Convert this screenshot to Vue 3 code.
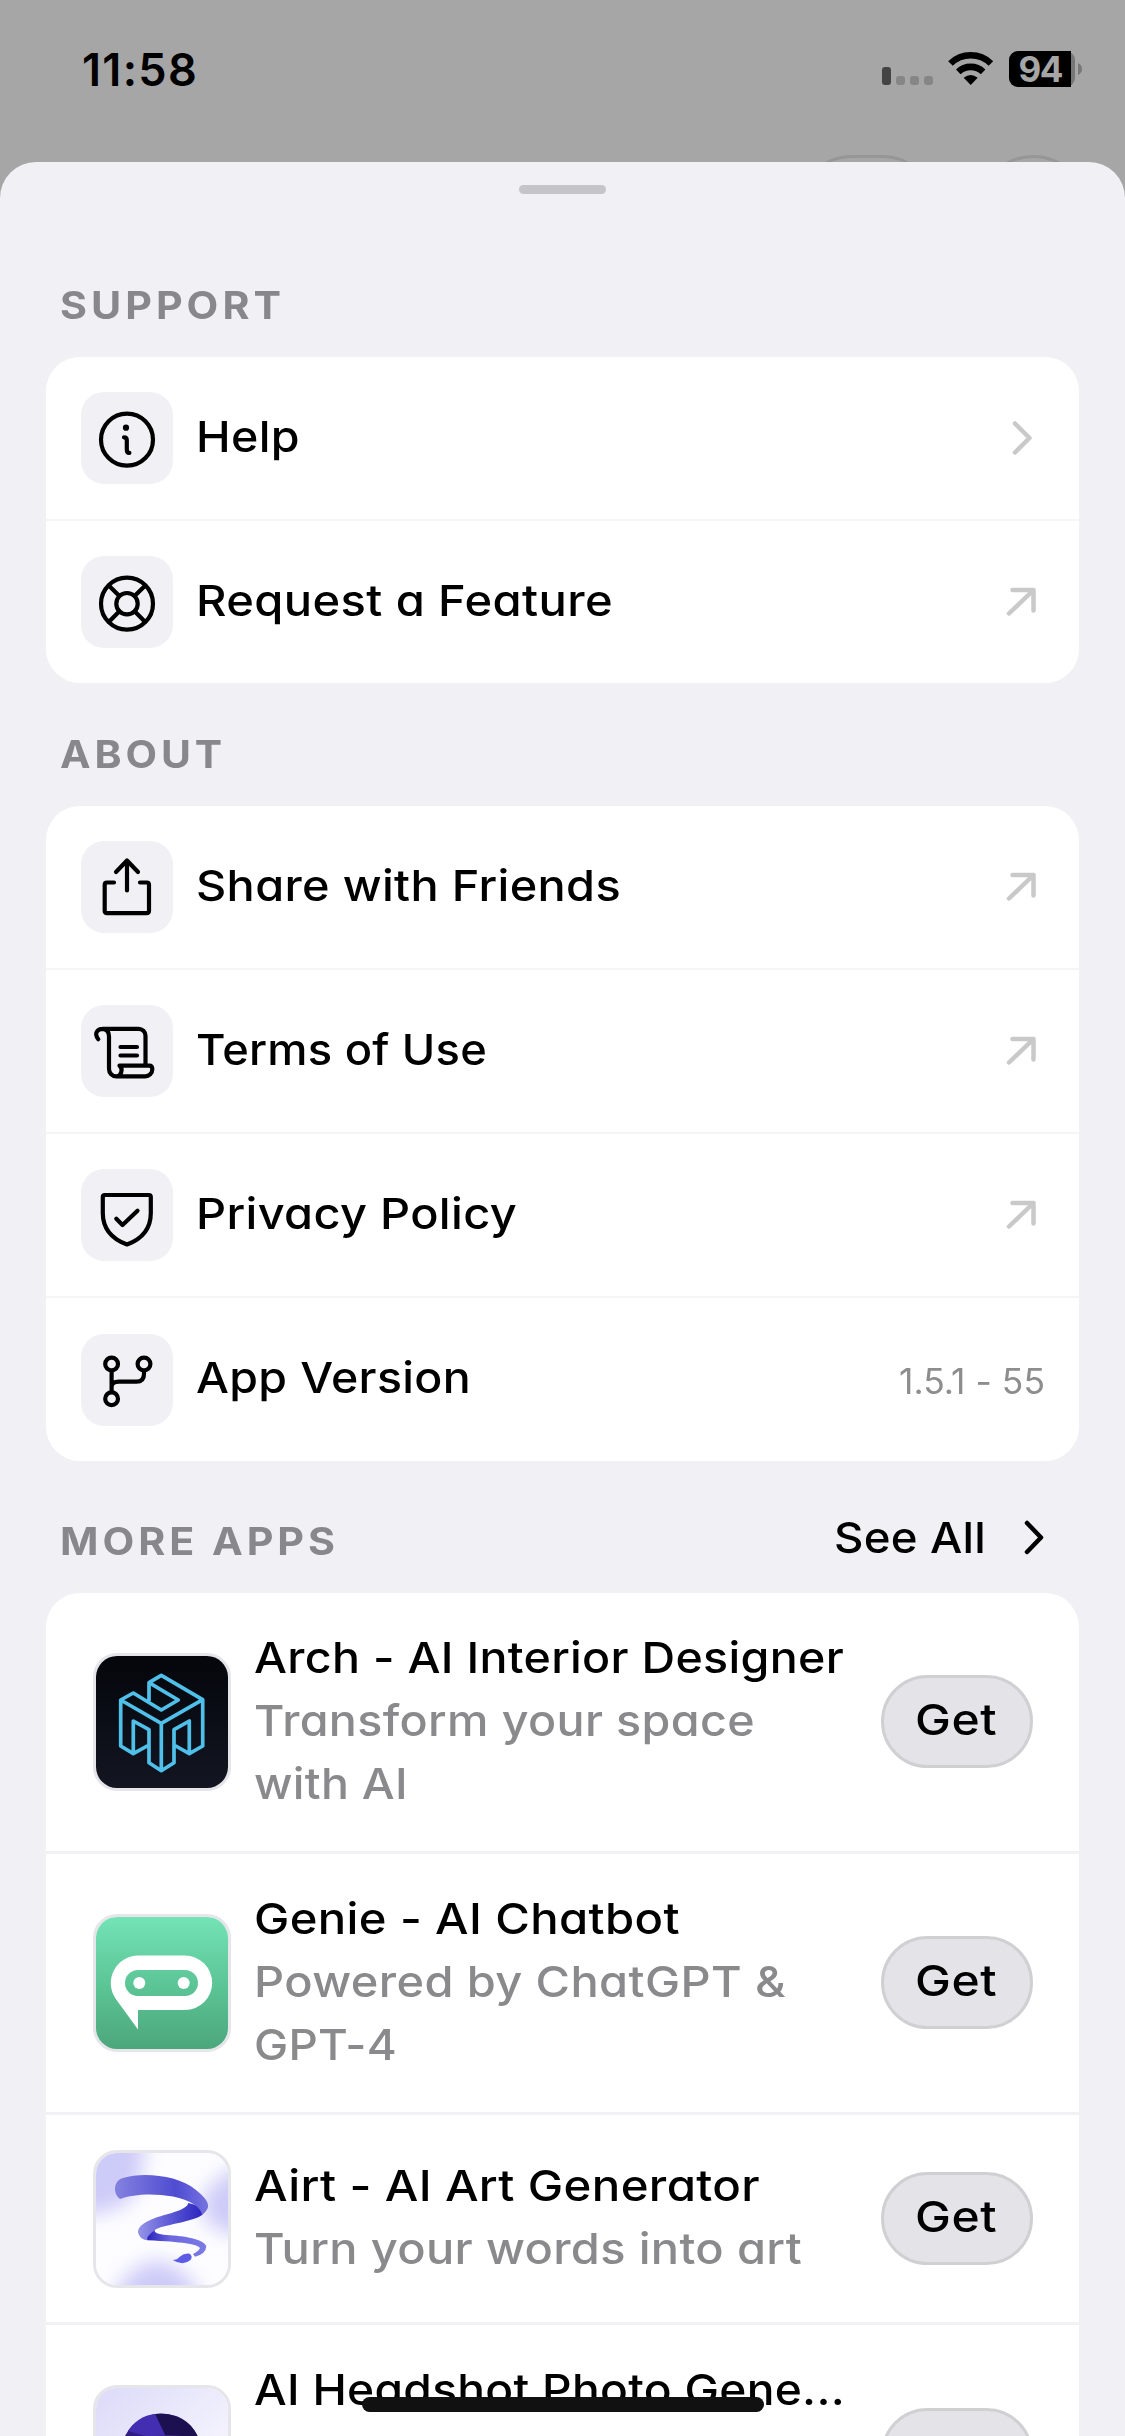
<script setup>
// Widens a label to its designed width: partly by stretching the glyphs,
// with the remainder taken up by letter-spacing. v-fit:caps tracks more.
const vFit = {
  mounted(el, { value, arg }) {
    const n = el.textContent.length
    const natural = el.getBoundingClientRect().width
    const share = arg === 'caps' ? 0.35 : 0.85
    const stretch = Math.min(1.13, Math.max(1, 1 + (value / natural - 1) * share))
    const inner = value / stretch
    el.style.letterSpacing = ((inner - natural) / n).toFixed(3) + 'px'
    el.style.width = inner.toFixed(2) + 'px'
    el.style.marginRight = (value - inner).toFixed(2) + 'px'
    el.style.transform = `scaleX(${stretch.toFixed(4)})`
  },
}

const support = [
  { icon: 'info', label: 'Help', w: 104, end: 'chevron' },
  { icon: 'buoy', label: 'Request a Feature', w: 417, end: 'arrow' },
]
const about = [
  { icon: 'share', label: 'Share with Friends', w: 425, end: 'arrow' },
  { icon: 'terms', label: 'Terms of Use', w: 291, end: 'arrow' },
  { icon: 'shield', label: 'Privacy Policy', w: 321, end: 'arrow' },
  { icon: 'branch', label: 'App Version', w: 275, end: 'version' },
]
const groups = [
  { title: 'SUPPORT', w: 225, rows: support },
  { title: 'ABOUT', w: 166, rows: about },
]
const apps = [
  { icon: 'arch', title: 'Arch - AI Interior Designer', w: 590, lines: [['Transform your space', 501], ['with AI', 154]] },
  { icon: 'genie', title: 'Genie - AI Chatbot', w: 426, lines: [['Powered by ChatGPT &', 532], ['GPT-4', 143]] },
  { icon: 'airt', title: 'Airt - AI Art Generator', w: 506, lines: [['Turn your words into art', 548]] },
  { icon: 'head', title: 'AI Headshot Photo Gene...', w: 591, lines: [] },
]
</script>

<template>
  <div class="screen">
    <div class="status">
      <span class="time">11:58</span>
      <svg class="indicators" width="204" height="40" viewBox="0 0 204 40">
        <rect x="4" y="18" width="9" height="18" rx="3" fill="#444" />
        <g fill="#868686">
          <rect x="18" y="27" width="9" height="9" rx="3" />
          <rect x="32" y="27" width="9" height="9" rx="3" />
          <rect x="46" y="27" width="9" height="9" rx="3" />
        </g>
        <g fill="none" stroke="#000" stroke-width="6.600">
          <path d="M72.500 14.500a29 29 0 0 1 40.400 0" />
          <path d="M80.300 22.800a18 18 0 0 1 24.800 0" />
        </g>
        <path d="M92.700 36l-7-7.200q7-5.800 14 0z" />
        <rect x="131" y="2" width="66" height="36" rx="9" fill="#777" />
        <path d="M140 2h53v36h-53a9 9 0 0 1-9-9V11a9 9 0 0 1 9-9z" />
        <path d="M200 14q4 2 4 6t-4 6z" fill="#777" />
        <text x="163" y="32.500" class="level" text-anchor="middle" textLength="45">94</text>
      </svg>
      <span class="ghost pill"></span>
      <span class="ghost round"></span>
    </div>

    <main class="sheet">
      <div class="handle"></div>

      <section v-for="g in groups" :key="g.title" class="group">
        <h2 class="heading"><span v-fit:caps="g.w" class="fit">{{ g.title }}</span></h2>
        <div class="card">
          <div v-for="r in g.rows" :key="r.label" class="row">
            <svg class="tile" viewBox="0 0 92 92">
              <g v-if="r.icon === 'info'">
                <circle cx="46" cy="47.700" r="26" />
                <circle cx="45" cy="35.700" r="3.100" class="solid" />
                <path d="M43 45.300q2.800 0 2.800 3V57.500q0 3.400 2.600 3.400" />
              </g>
              <g v-else-if="r.icon === 'buoy'">
                <circle cx="46" cy="47.700" r="26" />
                <circle cx="46" cy="47.700" r="10.700" />
                <path d="M28 29.700l10.400 10.400M64 29.700L53.600 40.100M28 65.700l10.400-10.400M64 65.700L53.600 55.300" />
              </g>
              <g v-else-if="r.icon === 'share'">
                <path d="M46 20v29.500M35 31l11-11.500L57 31M33 41.500h-7q-2.300 0-2.300 2.300V69.800q0 2.300 2.300 2.300h39.700q2.300 0 2.300-2.300V43.800q0-2.300-2.300-2.300H59" />
              </g>
              <g v-else-if="r.icon === 'terms'">
                <path d="M17.300 34.200Q14 30 15.800 26.700Q17.500 23.800 21.500 23.800H57.500a7 7 0 0 1 7 7V60.500M21.500 23.800q6.500.5 6.500 7.500V64a7.300 7.300 0 0 0 7.300 7.300H64.300a7 7 0 0 0 7-7q0-3.700-3-3.700H38.500q3.200 2.700 1.700 6.700q-1.300 4-5 4M39.500 42h16.500M39.500 50.500h16.500" />
              </g>
              <g v-else-if="r.icon === 'shield'">
                <path d="M23.800 26h44q2 0 2 2V44C69.800 60 61 70 46 75.500C31 70 21.800 60 21.800 44V28q0-2 2-2zM35.300 49.700l6.200 6.300L56.500 41.700" />
              </g>
              <g v-else>
                <circle cx="30.600" cy="30" r="6.400" />
                <circle cx="63" cy="30" r="6.400" />
                <circle cx="30.600" cy="64.700" r="6.400" />
                <path d="M30.600 37v21M63 37v3q0 7.700-7.500 7.700H38q-7.400 0-7.400 5" />
              </g>
            </svg>
            <span class="label"><span v-fit="r.w" class="fit">{{ r.label }}</span></span>
            <span v-if="r.end === 'version'" class="version"><span v-fit="146" class="fit">1.5.1 - 55</span></span>
            <svg v-else-if="r.end === 'chevron'" class="end" viewBox="0 0 36 40"><path d="M13 5.500l14.500 14.500L13 34.500" /></svg>
            <svg v-else class="end" viewBox="0 0 36 40"><path d="M7 31.500L31 8.500M10.500 8H31.500V28.500" /></svg>
          </div>
        </div>
      </section>

      <section class="group">
        <h2 class="heading more">
          <span v-fit:caps="279" class="fit">MORE APPS</span>
          <a class="all"><span v-fit="152" class="fit">See All</span>
            <svg width="24" height="40" viewBox="0 0 24 40"><path d="M5 6l14 14.500L5 35" /></svg>
          </a>
        </h2>
        <div class="card">
          <div v-for="a in apps" :key="a.icon" class="app">
            <div class="logo">
              <svg viewBox="0 0 138 138">
                <defs>
                  <linearGradient id="night" x2="0" y2="1"><stop stop-color="#04060b" /><stop offset="1" stop-color="#131522" /></linearGradient>
                  <linearGradient id="mint" x2="0" y2="1"><stop stop-color="#75e4b8" /><stop offset=".5" stop-color="#5cc697" /><stop offset="1" stop-color="#4ba57a" /></linearGradient>
                  <linearGradient id="rib1"><stop stop-color="#8482df" /><stop offset=".65" stop-color="#4f4cd2" /><stop offset="1" stop-color="#7673e0" /></linearGradient>
                  <linearGradient id="rib2"><stop stop-color="#9694e8" /><stop offset=".5" stop-color="#5b58d6" /><stop offset="1" stop-color="#2a23bd" /></linearGradient>
                  <linearGradient id="rib3"><stop stop-color="#2a23bd" /><stop offset=".4" stop-color="#6b68df" /><stop offset="1" stop-color="#7c7ae6" /></linearGradient>
                  <filter id="soft" x="-50%" y="-50%" width="200%" height="200%"><feGaussianBlur stdDeviation="10" /></filter>
                  <linearGradient id="iris" x2="1" y2="1"><stop stop-color="#dcd9f8" /><stop offset="1" stop-color="#fff" /></linearGradient>
                  <linearGradient id="blade"><stop stop-color="#2c1a78" /><stop offset="1" stop-color="#4a32b4" /></linearGradient>
                </defs>
                <g v-if="a.icon === 'arch'">
                  <rect width="138" height="138" fill="url(#night)" />
                  <path fill="none" stroke="#4fc0ea" stroke-width="3.700" stroke-linejoin="round" d="M56 48V29.700L68.300 22.300L109.700 46.700V93L96.300 100.700L81 92M56 29.700L85.300 47L68.300 57L40.300 40L27.700 47L68.300 70.300L109.700 46.700M27.700 47V93L40.300 100.700L56 92M40.300 100.700V68L56 76.700V109.700L68.300 117.700L81 109.700V76.700L96.300 68V100.700M68.300 70.300V117.700" />
                </g>
                <g v-else-if="a.icon === 'genie'">
                  <rect width="138" height="138" fill="url(#mint)" />
                  <path fill="#fff" fill-rule="evenodd" d="M45.300 41.600H92a27.200 27.200 0 0 1 0 54.400H45V115.600L22.500 84.500A27.500 27.500 0 0 1 45.300 41.600zM45 56a13 13 0 0 0 0 26H92a13 13 0 0 0 0-26z" />
                  <circle cx="46.300" cy="69" r="6" fill="#fff" /><circle cx="90.700" cy="69" r="6" fill="#fff" />
                </g>
                <g v-else-if="a.icon === 'airt'">
                  <rect width="138" height="138" fill="#fdfdff" />
                  <g filter="url(#soft)" fill="#cdcbf8">
                    <path d="M-20-20H52Q52 30 36 52Q10 66-20 66z" />
                    <path d="M160 10V84Q125 88 110 66Q100 35 160 10z" />
                    <path d="M15 160Q30 115 65 110Q100 118 112 160z" />
                  </g>
                  <path fill="url(#rib2)" d="M95.300 53C94 60 77 63 62 68C48 73 43.500 79 45.500 84Q48 90 54.500 90.300L62 80C68 75 100 72 109 65Q116 58 95.300 53z" />
                  <path fill="url(#rib1)" d="M27 49C19 43 21 30 30 28C50 22 85 25 103 40C118 52 118 58 109 65C108 57 97 50 80 46.500C60 43 40 44 27 49z" />
                  <path fill="url(#rib3)" d="M62 80Q60 84 73.700 85C92 86 110 89 113.300 96Q113 104 102 106.700L100 104Q106 101 107 98C104 94 90 92 54.500 90.300Q52 87 62 80z" />
                  <path fill="#5e5ce6" d="M79.700 110Q84 110 87 106.500Q91 103 96 103.500Q100.500 106 97.500 110Q90 116.500 79.700 110z" />
                </g>
                <g v-else>
                  <rect width="138" height="138" fill="url(#iris)" />
                  <circle cx="68.300" cy="69" r="40.500" fill="url(#blade)" />
                  <path fill="#1c1050" d="M62 29L72 50L105 52Q94 27 62 29z" />
                  <path fill="#432db0" d="M62 29L72 50L56 52L35 46Q45 31 62 29z" />
                </g>
              </svg>
            </div>
            <div class="copy" :class="{ tall: !a.lines.length }">
              <div><span v-fit="a.w" class="fit">{{ a.title }}</span></div>
              <div v-for="l in a.lines" :key="l[0]" class="desc"><span v-fit="l[1]" class="fit">{{ l[0] }}</span></div>
            </div>
            <button class="get"><span v-if="a.icon !== 'head'" v-fit="82" class="fit">Get</span></button>
          </div>
        </div>
      </section>
    </main>
    <div class="home"></div>
  </div>
</template>

<style>
body { background: #a6a6a6; overflow: hidden; }
</style>

<style scoped>
.screen {
  position: relative;
  width: 1125px;
  height: 2436px;
  overflow: hidden;
  display: flex;
  flex-direction: column;
  background: #a6a6a6;
  color: #000;
  font: 470 43px/63px Inter, "Liberation Sans", sans-serif;
  font-feature-settings: "cv11" 1;
}
.screen span { white-space: nowrap; }
.fit { display: inline-block; transform-origin: left center; vertical-align: top; }
.status {
  position: relative;
  flex: none;
  height: 162px;
  display: flex;
  justify-content: space-between;
  padding: 0 43px 0 82px;
}
.time { align-self: flex-start; padding-top: 38px; font-weight: 600; font-size: 45px; letter-spacing: 1.3px; }
.indicators { margin-top: 49px; overflow: visible; }
.level { font: 700 35px Inter, sans-serif; fill: #a6a6a6; }
.ghost {
  position: absolute;
  top: 155px;
  height: 110px;
  box-sizing: border-box;
  border: 3px solid #969696;
  border-radius: 55px;
}
.pill { left: 797px; width: 140px; }
.round { left: 978px; width: 110px; }
.sheet {
  position: relative;
  flex: none;
  height: 2274px;
  overflow: hidden;
  border-radius: 36px 36px 0 0;
  background: #f1f0f5;
  padding: 0 46px;
  box-sizing: border-box;
}
.handle { width: 87px; height: 9px; margin: 23px auto 0; border-radius: 5px; background: #c5c4c9; }
.heading {
  display: flex;
  align-items: flex-end;
  box-sizing: border-box;
  height: 123px;
  margin: 0;
  padding: 0 0 31px 14px;
  font-size: 38px;
  line-height: 42px;
  font-weight: 700;
  color: #88878c;
}
.group:nth-of-type(1) .heading { height: 163px; }
.heading.more { height: 132px; justify-content: space-between; padding-right: 33px; }
.all { display: flex; align-items: center; gap: 36px; color: #000; font-size: 43px; font-weight: 470; margin-bottom: 4px; }
.all svg { fill: none; stroke: #000; stroke-width: 4.500; stroke-linecap: round; stroke-linejoin: round; }
.card { border-radius: 34px; background: #fff; overflow: hidden; }
.row { display: flex; align-items: center; height: 162.1px; padding: 0 36px 0 35px; }
.row + .row { border-top: 2px solid #f5f5f6; }
.tile {
  flex: none;
  width: 92px;
  height: 92px;
  border-radius: 23px;
  background: #f1f0f5;
  fill: none;
  stroke: #000;
  stroke-width: 4.200;
  stroke-linecap: round;
  stroke-linejoin: round;
}
.solid { fill: #000; stroke: none; }
.label { flex: 1; padding-left: 23px; margin-top: -4px; }
.end { width: 36px; height: 40px; margin-right: 5px; fill: none; stroke: #c9c9ca; stroke-width: 4.500; stroke-linecap: round; stroke-linejoin: round; }
.version { font-size: 35px; font-weight: 400; color: #8d8d8e; margin: 4px -2px 0 0; }
.app { display: flex; align-items: center; padding: 34.6px 46px 34.6px 46.5px; }
.app + .app { border-top: 3px solid #f2f2f5; }
.logo { flex: none; box-sizing: border-box; width: 138px; height: 138px; border: 3px solid #e5e5ea; border-radius: 24px; overflow: hidden; }
.logo svg { display: block; margin: -3px; width: 138px; height: 138px; }
.copy { flex: 1; padding-left: 23px; position: relative; top: -1.5px; }
.tall { min-height: 189px; }
.desc { color: #8a8a8c; }
.get {
  display: flex;
  align-items: center;
  justify-content: center;
  box-sizing: border-box;
  width: 152px;
  height: 93px;
  padding: 0 2px 4px 0;
  border: 3px solid #d0d0d3;
  border-radius: 47px;
  background: #e4e3e8;
  color: #000;
  font: inherit;
  font-feature-settings: inherit;
  font-weight: 550;
}
.home { position: absolute; left: 362px; top: 2397px; width: 402px; height: 15px; border-radius: 8px; background: #111; }
</style>
